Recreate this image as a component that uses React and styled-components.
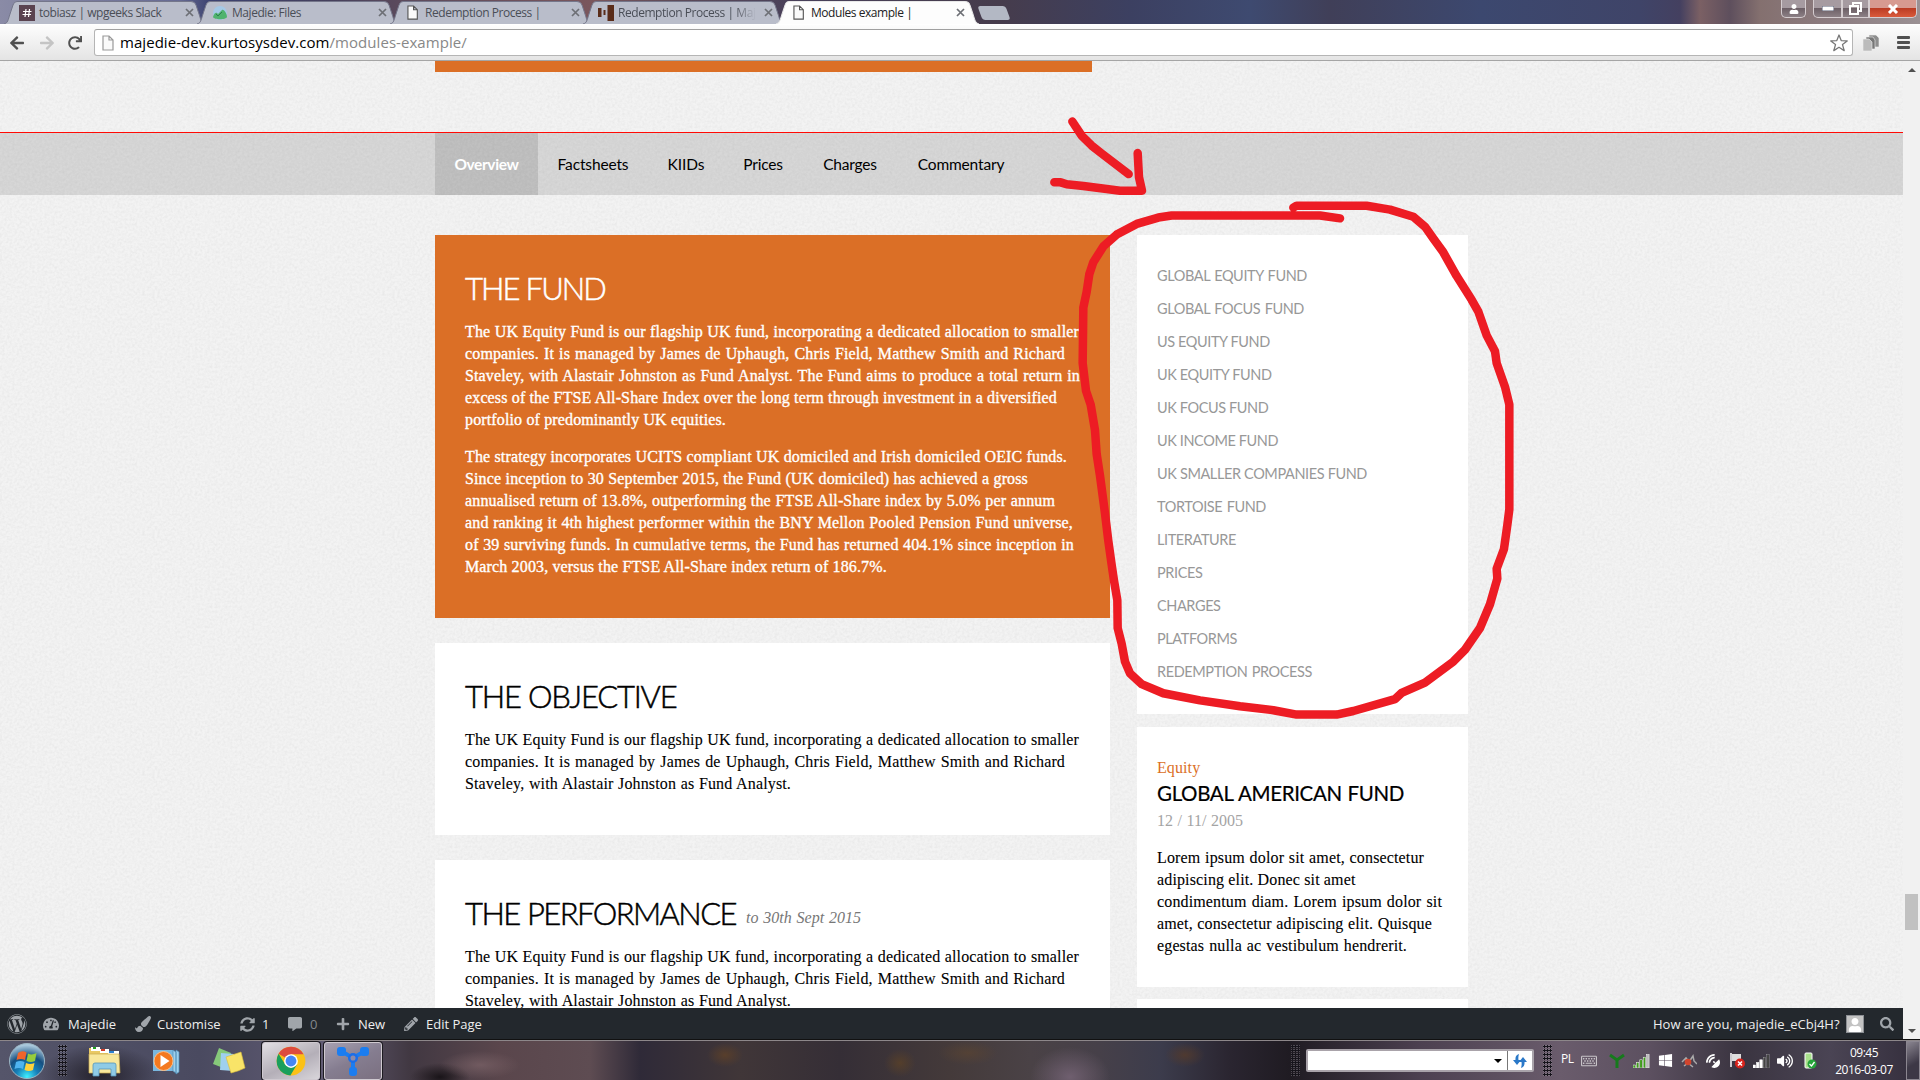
import React from "react";
import styled, { createGlobalStyle, css } from "styled-components";
import {
  FaWordpress, FaTachometerAlt, FaPaintBrush, FaSyncAlt, FaCommentAlt, FaPlus,
  FaPencilAlt, FaSearch, FaArrowLeft, FaArrowRight, FaRedo, FaUser,
  FaRegKeyboard, FaWindows, FaVolumeUp, FaSatelliteDish,
} from "react-icons/fa";

const sans = `"Open Sans", "Noto Sans", sans-serif`;
const display = `Lato, "Open Sans", sans-serif`;
const serif = `"Liberation Serif", "Times New Roman", serif`;
const orange = "#db6f26";

const grain = `url("data:image/svg+xml,%3Csvg xmlns='http://www.w3.org/2000/svg' width='240' height='240'%3E%3Cfilter id='n'%3E%3CfeTurbulence type='fractalNoise' baseFrequency='.4' numOctaves='2' stitchTiles='stitch'/%3E%3CfeColorMatrix values='0 0 0 0 0 0 0 0 0 0 0 0 0 0 0 .05 .05 0 0 -.038'/%3E%3C/filter%3E%3Crect width='240' height='240' filter='url(%23n)'/%3E%3C/svg%3E")`;

const GlobalStyle = createGlobalStyle`
  * { box-sizing: border-box; }
  body { margin: 0; overflow: hidden; }
  p, h2, h3, ul { margin: 0; padding: 0; font-weight: inherit; }
`;

const Screen = styled.div`
  position: relative;
  width: 1920px;
  height: 1080px;
  display: flex;
  flex-direction: column;
  overflow: hidden;
  font-family: ${sans};
`;

/* ---------- browser chrome ---------- */
const TabStrip = styled.div`
  height: 24px;
  flex: none;
  display: flex;
  align-items: flex-end;
  padding-left: 4px;
  background: linear-gradient(90deg, #8a8ba6 0, #666a92 180px, #3c4270 210px, #45405c 330px, #5b4a5c 400px, #7a565c 590px,
    #5c4a58 680px, #48405a 800px, #463c4c 1000px, #3c4061 1130px, #3e4a70 1250px, #403f58 1330px, #3c486f 1480px,
    #3f4468 1640px, #444060 1680px, #7b6064 1700px, #5e4f5d 1730px, #84706f 1760px, #8c7c80 1830px, #9b9194 1920px);
`;
const Tab = styled.div`
  position: relative;
  width: ${(p) => (p.$active ? 203 : 201)}px;
  height: 23px;
  flex: none;
  margin-right: ${(p) => (p.$active ? -1 : -8)}px;
  padding: 0 ${(p) => (p.$active ? 14 : 11)}px 0 15px;
  display: flex;
  align-items: center;
  z-index: ${(p) => (p.$active ? 2 : 1)};
  font-size: 12px;
  letter-spacing: -0.45px;
  color: ${(p) => (p.$active ? "#222" : "#4a4e57")};
`;
const TabShape = styled.svg`
  position: absolute;
  inset: 0;
  width: 100%;
  height: 100%;
  z-index: -1;
`;
const TabIcon = styled.span`
  width: 16px;
  margin-right: 4px;
  display: flex;
  justify-content: center;
`;
const TabTitle = styled.span`
  flex: 1;
  white-space: nowrap;
  margin-right: 8px;
  line-height: 20px;
  ${(p) => p.$fade && css`
    mask-image: linear-gradient(90deg, #000 84%, transparent);
  `}
`;
const NewTab = styled.span`
  width: 28px;
  height: 14px;
  margin: 0 0 4px 2px;
  background: #b3b8c4;
  border-radius: 3px;
  transform: skewX(20deg);
`;
const WindowButtons = styled.div`
  margin: 0 3px 0 auto;
  align-self: flex-start;
  display: flex;
`;
const WindowButton = styled.span`
  width: ${(p) => p.$w}px;
  height: 18px;
  margin-left: ${(p) => p.$gap || 0}px;
  display: flex;
  align-items: center;
  justify-content: center;
  color: #fff;
  border: 1px solid #d5cdd0;
  border-top: 0;
  border-radius: ${(p) => p.$round || "0"};
  background: ${(p) => p.$close
    ? "linear-gradient(#d79a90 0 45%, #b93a22 46%, #d95a3b)"
    : "linear-gradient(#a69ba1 0 45%, #6a5d64 46%, #8c8085)"};
`;
const Toolbar = styled.div`
  height: 37px;
  flex: none;
  display: flex;
  align-items: center;
  border-top: 1px solid #fff;
  border-bottom: 1px solid #a5a5a5;
  background: linear-gradient(#fdfdfd, #e4e4e4);
  color: #505050;
`;
const ToolSlot = styled.span`
  width: ${(p) => p.$w}px;
  flex: none;
  display: flex;
  justify-content: center;
  color: ${(p) => p.$color || "#505050"};
`;
const Omnibox = styled.div`
  width: 1759px;
  height: 27px;
  flex: none;
  margin: 0 8px 0 3px;
  padding: 0 4px 0 7px;
  display: flex;
  align-items: center;
  background: #fff;
  border: 1px solid #b5b5b5;
  border-top-color: #a0a0a0;
  border-radius: 3px;
`;
const Url = styled.span`
  flex: 1;
  margin-left: 6px;
  padding-bottom: 2px;
  font-size: 15px;
  letter-spacing: 0.05px;
  line-height: 22px;
  color: #888;
  b { color: #000; font-weight: 400; }
`;

/* ---------- web page ---------- */
const Viewport = styled.div`
  height: 979px;
  flex: none;
  display: flex;
`;
const Page = styled.div`
  width: 1903px;
  display: flex;
  flex-direction: column;
  background: ${grain} #f3f3f3;
`;
const PageBody = styled.div`
  height: 947px;
  overflow: hidden;
`;
const TopBanner = styled.div`
  width: 657px;
  height: 11px;
  margin-left: 435px;
  background: ${orange};
`;
const SubNav = styled.nav`
  height: 63px;
  margin-top: 60px;
  padding-left: 435px;
  display: flex;
  border-top: 1px solid #ff0a05;
  background: rgba(0, 0, 0, 0.115);
  background-clip: padding-box;
`;
const SubNavItem = styled.a`
  width: ${(p) => p.$w}px;
  padding-bottom: 1px;
  display: flex;
  align-items: center;
  justify-content: center;
  font: ${(p) => (p.$active ? 700 : 400)} 15.5px ${display};
  letter-spacing: ${(p) => p.$ls}px;
  color: ${(p) => (p.$active ? "#fff" : "#000")};
  background: ${(p) => (p.$active ? "rgba(0, 0, 0, 0.105)" : "none")};
`;
const Columns = styled.div`
  display: flex;
  gap: 27px;
  padding: 40px 0 0 435px;
`;
const Main = styled.main`
  width: 675px;
  display: flex;
  flex-direction: column;
  gap: 25px;
`;
const Aside = styled.aside`
  width: 331px;
  display: flex;
  flex-direction: column;
  gap: 13px;
`;
const Card = styled.section`
  height: ${(p) => p.$h}px;
  flex: none;
  padding: 35px 30px 0;
  color: ${(p) => (p.$accent ? "#fff" : "#000")};
  background: ${(p) => (p.$accent ? orange : "#fff")};
`;
const fitted = css`
  display: block;
  width: ${(p) => p.$w}px;
  white-space: nowrap;
  text-align: justify;
  text-align-last: justify;
`;
const HeadingRow = styled.div`
  display: flex;
  align-items: baseline;
  height: 51px;
`;
const Heading = styled.h2`
  ${fitted}
  font: 300 31px/36px ${display};
  letter-spacing: ${(p) => p.$ls}px;
  -webkit-text-stroke: 0.5px;
`;
const HeadingNote = styled.em`
  ${fitted}
  position: relative;
  top: -2px;
  margin-left: 10px;
  font: italic 16px/22px ${serif};
  color: #777;
`;
const Paragraph = styled.p`
  margin-bottom: 15px;
  font: 16px/22px ${serif};
  letter-spacing: 0.14px;
  -webkit-text-stroke: ${(p) => (p.$strong ? 0.35 : 0.1)}px;
`;
const Line = styled.span`
  ${fitted}
`;
const LinkCard = styled.ul`
  height: 479px;
  flex: none;
  padding: 24px 20px 0;
  list-style: none;
  background: #fff;
`;
const LinkItem = styled.li`
  ${fitted}
  height: 33px;
  font: 400 14.5px/33px ${display};
  letter-spacing: ${(p) => p.$ls}px;
  color: #989898;
`;
const FundCard = styled.section`
  height: 260px;
  flex: none;
  padding: 30px 20px 0;
  background: #fff;
  color: #000;
`;
const FundType = styled.div`
  font: 16px/22px ${serif};
  letter-spacing: 0.1px;
  color: ${orange};
`;
const FundName = styled.h3`
  ${fitted}
  height: 29px;
  font: 400 20.5px/28px ${display};
  letter-spacing: -0.35px;
  -webkit-text-stroke: 0.2px;
`;
const FundDate = styled.div`
  ${fitted}
  height: 39px;
  font: 16px/26px ${serif};
  color: #a4a4a4;
`;
const NextCard = styled.div`
  height: 40px;
  flex: none;
  margin-top: -1px;
  background: #fff;
`;
const AdminBar = styled.div`
  height: 32px;
  flex: none;
  display: flex;
  align-items: center;
  background: #23282d;
  color: #eee;
  font-size: 13px;
`;
const AdminIcon = styled.span`
  width: ${(p) => p.$w}px;
  display: flex;
  justify-content: center;
  color: #a0a5aa;
`;
const AdminLabel = styled.span`
  width: ${(p) => p.$w}px;
  white-space: nowrap;
  color: ${(p) => (p.$dim ? "#82878c" : "#eee")};
`;
const Avatar = styled.span`
  width: 18px;
  height: 18px;
  margin: 0 14px 0 6px;
  display: flex;
  align-items: flex-end;
  justify-content: center;
  border: 1px solid #8c8f94;
  background: #c3c3c3;
  color: #fff;
`;
const Scrollbar = styled.div`
  width: 17px;
  display: flex;
  flex-direction: column;
  align-items: center;
  justify-content: space-between;
  padding: 7px 0;
  background: #f1f1f1;
`;
const ScrollThumb = styled.span`
  width: 13px;
  height: 36px;
  margin-top: 722px;
  background: #c1c1c1;
`;
const ScrollArrow = styled.span`
  border: 4px solid transparent;
  border-top-width: ${(p) => (p.$up ? 0 : 4)}px;
  border-bottom-width: ${(p) => (p.$up ? 4 : 0)}px;
  border-${(p) => (p.$up ? "bottom" : "top")}-color: #505050;
`;

/* ---------- taskbar ---------- */
const Taskbar = styled.div`
  height: 40px;
  flex: none;
  display: flex;
  align-items: center;
  border-top: 1px solid #8d878a;
  box-shadow: 0 -1px #111;
  background:
    radial-gradient(ellipse 60px 30px at 100px 34px, rgba(25, 22, 30, .8), transparent),
    radial-gradient(ellipse 40px 14px at 480px 24px, rgba(125, 100, 105, .7), transparent),
    radial-gradient(ellipse 30px 14px at 440px 36px, rgba(20, 16, 20, .9), transparent),
    radial-gradient(ellipse 18px 12px at 725px 14px, rgba(95, 65, 40, .8), transparent),
    radial-gradient(ellipse 16px 14px at 900px 22px, rgba(90, 65, 40, .8), transparent),
    radial-gradient(ellipse 30px 12px at 968px 12px, rgba(90, 68, 50, .7), transparent),
    radial-gradient(ellipse 40px 30px at 1070px 36px, rgba(115, 98, 115, .9), transparent),
    radial-gradient(ellipse 20px 12px at 1185px 14px, rgba(90, 60, 40, .7), transparent),
    linear-gradient(90deg, #55556a 0, #4a4a60 200px, #625c74 330px, #413842 410px, #5a464c 500px, #5e4c52 590px, #2f2a38 640px,
      #403638 740px, #352e36 840px, #443a3a 950px, #4a4246 1030px, #464049 1100px, #3c3c4c 1160px, #2a2530 1230px,
      #1f1b22 1290px, #4c4050 1420px, #6a5c6c 1560px, #5c5060 1650px, #3a3440 1740px, #4a4454 1830px, #342e3c 1920px);
`;
const TaskSlot = styled.span`
  width: ${(p) => p.$w}px;
  height: 38px;
  margin-left: ${(p) => p.$gap || 0}px;
  display: flex;
  flex: none;
  align-items: center;
  justify-content: center;
  color: #fff;
  ${(p) => p.$open && css`
    border: 1px solid #cfc9d0;
    border-radius: 3px;
    box-shadow: 0 0 0 1px #1c1a20;
    background: ${p.$open === "active"
      ? "linear-gradient(155deg, #e2dfe4, #b4afb8 55%, #d8d5da)"
      : "linear-gradient(155deg, #a7a0b0, #857d90 50%, #7b7080)"};
  `}
`;
const Grip = styled.span`
  width: 9px;
  height: 31px;
  margin-left: ${(p) => p.$gap}px;
  flex: none;
  background: radial-gradient(circle at 1.5px 1.5px, #15131a 1px, rgba(170, 165, 175, .35) 1.4px, transparent 1.8px) 0 0 / 3px 4px;
`;
const AddressBox = styled.div`
  width: 228px;
  height: 23px;
  margin-left: 6px;
  flex: none;
  display: flex;
  align-items: center;
  justify-content: flex-end;
  border: 2px solid #a9a3aa;
  border-radius: 2px;
  background: #fff;
`;
const Caret = styled.span`
  margin-right: 5px;
  border: 4px solid transparent;
  border-top-color: #000;
  border-bottom: 0;
`;
const GoButton = styled.span`
  width: 25px;
  height: 19px;
  display: flex;
  align-items: center;
  justify-content: center;
  border-left: 1px solid #777;
`;
const Language = styled.span`
  width: 16px;
  margin-left: 9px;
  padding-bottom: 5px;
  color: #fff;
  font-size: 12px;
  letter-spacing: -0.5px;
`;
const FlippedDish = styled(FaSatelliteDish)`
  transform: scaleX(-1);
`;
const Clock = styled.div`
  width: 70px;
  margin-left: 7px;
  color: #fff;
  text-align: center;
  font-size: 12px;
  line-height: 17px;
  letter-spacing: -0.5px;
`;
const ShowDesktop = styled.span`
  width: 14px;
  height: 39px;
  margin-left: auto;
  border: 1px solid #8b8690;
  background: linear-gradient(150deg, #8a8590, #3d3846 60%);
`;
const Annotation = styled.svg`
  position: absolute;
  inset: 0;
  width: 1920px;
  height: 1080px;
  pointer-events: none;
  path {
    fill: none;
    stroke: #ed1c24;
    stroke-width: 8.5px;
    stroke-linecap: round;
    stroke-linejoin: round;
    vector-effect: non-scaling-stroke;
  }
`;

const FileIcon = ({ size = 15, color = "#555" }) => (
  <svg width={size * 0.75} height={size} viewBox="0 0 12 16" fill="#fafafa" stroke={color} strokeWidth="1.2">
    <path d="M1 1h6l4 4v10H1zM7 1v4h4" />
  </svg>
);
const SlackHash = () => (
  <svg width="16" height="16" viewBox="0 0 16 16">
    <rect width="16" height="16" fill="#5a4350" />
    <path d="M7 4l-1 8M10.500 4l-1 8M4 6.500h8.500M3.500 9.500H12" stroke="#fff" strokeWidth="1.2" />
  </svg>
);
const Basecamp = () => (
  <svg width="16" height="16" viewBox="0 0 16 16">
    <circle cx="8" cy="8" r="7" fill="#a5c9e6" />
    <path d="M1 12C2 8 4 7 5 8l1 1 4-4c2-1 5 4 5 7-1 3-13 3-14 0z" fill="#4fb36e" />
    <path d="M4 9l2 2 4-4" fill="none" stroke="#2d7f50" />
  </svg>
);
const MajedieMark = () => (
  <svg width="16" height="16" viewBox="0 0 16 16" fill="#5a2d1a">
    <path d="M0 3h3.500v9H0zM5.500 5h2v5h-2zM9.500 0H16v16H9.500z" />
  </svg>
);
const CloseX = () => (
  <svg width="9" height="9" viewBox="0 0 9 9" stroke="#6d6f75" strokeWidth="1.7">
    <path d="M1 1l7 7M8 1L1 8" />
  </svg>
);
const BrowserTab = ({ icon, title, active, fade }) => (
  <Tab $active={active}>
    <TabShape viewBox="0 0 201 23" preserveAspectRatio="none">
      <path
        d="M0 23C4 22 4 19 6 13L9 4Q10 .5 13 .5H187Q191 .5 192 4L195 13C197 19 197 22 201 23"
        fill={active ? "#fdfdfd" : "#b9bdca"}
        stroke={active ? "#e8e8e8" : "#74768a"}
      />
    </TabShape>
    <TabIcon>{icon}</TabIcon>
    <TabTitle $fade={fade}>{title}</TabTitle>
    <CloseX />
  </Tab>
);

const StartOrb = () => (
  <svg width="38" height="38" viewBox="0 0 38 38">
    <defs>
      <radialGradient id="orb" cx=".5" cy=".95" r=".9">
        <stop offset="0" stopColor="#3ff0ff" /><stop offset=".35" stopColor="#167fb8" />
        <stop offset=".65" stopColor="#164f80" /><stop offset="1" stopColor="#a9c8dc" />
      </radialGradient>
    </defs>
    <circle cx="19" cy="19" r="17.500" fill="url(#orb)" stroke="#9db6c4" />
    <path d="M10 11q4-3 8.500-.5L17 18q-4-2-8.500 0z" fill="#f0642b" />
    <path d="M20 11.500q4 2 8.500-.5L27 19q-4 2-8.500 0z" fill="#96cc3d" />
    <path d="M8 20q4-2 8.500 0L15 27q-4-2-8.500 0z" fill="#4fb4f0" />
    <path d="M18 21q4 2 8.500 0L25 28q-4 2-8.500 0z" fill="#ffd23c" />
  </svg>
);
const Explorer = () => (
  <svg width="33" height="32" viewBox="0 0 33 32">
    <path d="M1 6V3h9l2 3h19v20H1z" fill="#e9c964" />
    <path d="M3 2h9v4H3z" fill="#fff" /><path d="M5 2h3v2H5z" fill="#20a020" />
    <path d="M12 4h9v4h-9z" fill="#fff" /><path d="M13 4h4v2h-4z" fill="#d23a25" />
    <path d="M20 6h11v4H20z" fill="#fff" /><path d="M21 6h5v2h-5z" fill="#2a80d0" />
    <path d="M1 9h30l1 19H1z" fill="#f8e79c" stroke="#c9a94d" strokeWidth=".7" />
    <path d="M5 31V20q0-2 2-2h19q2 0 2 2v11h-5v-7H11v7z" fill="#8fcbe6" stroke="#5596b8" strokeWidth=".8" />
  </svg>
);
const MediaPlayer = () => (
  <svg width="28" height="28" viewBox="0 0 28 28">
    <path d="M1 3h20v21H1z" fill="#79b7df" /><path d="M21 3l3 2v21l-3-2zM24 3l3 2v20l-3 2z" fill="#9fd0ec" stroke="#4f8eb8" strokeWidth=".7" />
    <circle cx="11.500" cy="14" r="9.500" fill="#f4791f" stroke="#fbc08c" />
    <path d="M8.500 8l9 6-9 6z" fill="#fff" />
  </svg>
);
const StickyNotes = () => (
  <svg width="34" height="28" viewBox="0 0 34 28">
    <path d="M7 1l12 5-5 16-13-5z" fill="#86c97a" /><path d="M9 6l13 1-1 17-13-1z" fill="#9fd0ee" />
    <path d="M14 10l15-5 4 16q-6 3-14 5z" fill="#f9e468" stroke="#d9bc3a" strokeWidth=".6" />
  </svg>
);
const ChromeLogo = () => (
  <svg width="30" height="30" viewBox="0 0 48 48">
    <circle cx="24" cy="24" r="23" fill="#fbc116" />
    <path d="M24 24L4.100 12.500A23 23 0 0 1 44 13H24z" fill="#dd4b3e" />
    <path d="M4.100 12.500A23 23 0 0 0 23 47L33.500 29.500 14 28.500z" fill="#1a9f5c" />
    <circle cx="24" cy="24" r="11" fill="#fff" /><circle cx="24" cy="24" r="8.700" fill="#4586f4" />
  </svg>
);
const NodesLogo = () => (
  <svg width="32" height="30" viewBox="0 0 32 30" fill="#1b7df0">
    <path d="M4 5l12 7 12-7M16 11v15" stroke="#1b7df0" strokeWidth="4" fill="none" />
    <rect width="9" height="9" rx="3" x="0" y="1" /><rect width="9" height="9" rx="3" x="23" y="1" />
    <circle cx="16" cy="12" r="3.800" fill="#8d8aa8" stroke="#1b6ee8" strokeWidth="2.500" /><rect x="12" y="21" width="8" height="9" rx="3" />
  </svg>
);
const Bars = ({ colors }) => (
  <svg width="17" height="14" viewBox="0 0 17 14">
    {colors.map((c, i) => (
      <rect key={i} x={i * 3.4} y={11 - i * 2.6} width="2.500" height={3 + i * 2.600} fill={c} stroke="#fff" strokeWidth={c === "#444" ? 0.2 : 0.5} />
    ))}
  </svg>
);

const NAV = [["Overview", 103, -0.4], ["Factsheets", 110, -0.15], ["KIIDs", 76, -0.1], ["Prices", 78, -0.2], ["Charges", 96, -0.2], ["Commentary", 126, -0.15]];
const LINKS = [
  ["GLOBAL EQUITY FUND", 150], ["GLOBAL FOCUS FUND", 147], ["US EQUITY FUND", 112], ["UK EQUITY FUND", 113],
  ["UK FOCUS FUND", 110], ["UK INCOME FUND", 121], ["UK SMALLER COMPANIES FUND", 210], ["TORTOISE FUND", 109],
  ["LITERATURE", 79], ["PRICES", 46], ["CHARGES", 65], ["PLATFORMS", 80], ["REDEMPTION PROCESS", 155],
];
const INTRO = [
  ["The UK Equity Fund is our flagship UK fund, incorporating a dedicated allocation to smaller", 614],
  ["companies. It is managed by James de Uphaugh, Chris Field, Matthew Smith and Richard", 600],
  ["Staveley, with Alastair Johnston as Fund Analyst.", 326],
];
const FUND = [
  INTRO[0],
  INTRO[1],
  ["Staveley, with Alastair Johnston as Fund Analyst. The Fund aims to produce a total return in", 615],
  ["excess of the FTSE All-Share Index over the long term through investment in a diversified", 592],
  ["portfolio of predominantly UK equities.", 259],
];
const STRATEGY = [
  ["The strategy incorporates UCITS compliant UK domiciled and Irish domiciled OEIC funds.", 602],
  ["Since inception to 30 September 2015, the Fund (UK domiciled) has achieved a gross", 563],
  ["annualised return of 13.8%, outperforming the FTSE All-Share index by 5.0% per annum", 590],
  ["and ranking it 4th highest performer within the BNY Mellon Pooled Pension Fund universe,", 608],
  ["of 39 surviving funds. In cumulative terms, the Fund has returned 404.1% since inception in", 609],
  ["March 2003, versus the FTSE All-Share index return of 186.7%.", 421],
];
const LOREM = [
  ["Lorem ipsum dolor sit amet, consectetur", 267], ["adipiscing elit. Donec sit amet", 198],
  ["condimentum diam. Lorem ipsum dolor sit", 285], ["amet, consectetur adipiscing elit. Quisque", 275],
  ["egestas nulla ac vestibulum hendrerit.", 250],
];
const Lines = ({ rows, strong }) => (
  <Paragraph $strong={strong}>
    {rows.map(([text, w]) => <Line key={text} $w={w}>{text} </Line>)}
  </Paragraph>
);

export default function App() {
  return (
    <Screen>
      <GlobalStyle />
      <TabStrip>
        <BrowserTab icon={<SlackHash />} title="tobiasz | wpgeeks Slack" />
        <BrowserTab icon={<Basecamp />} title="Majedie: Files" />
        <BrowserTab icon={<FileIcon />} title="Redemption Process |" />
        <BrowserTab icon={<MajedieMark />} title="Redemption Process | Maj" fade />
        <BrowserTab icon={<FileIcon />} title="Modules example |" active />
        <NewTab />
        <WindowButtons>
          <WindowButton $w={25} $round="0 0 5px 5px"><FaUser size={10} /></WindowButton>
          <WindowButton $w={29} $gap={7} $round="0 0 0 5px">
            <svg width="12" height="5"><rect width="12" height="5" fill="#fff" stroke="#555a70" /></svg>
          </WindowButton>
          <WindowButton $w={27}>
            <svg width="13" height="13" fill="none" stroke="#fff" strokeWidth="2"><path d="M4 3V1h8v8h-2M1 4h8v8H1z" /></svg>
          </WindowButton>
          <WindowButton $w={48} $close $round="0 0 5px 0">
            <svg width="12" height="10" stroke="#fff" strokeWidth="3"><path d="M2 1l8 8M10 1L2 9" /></svg>
          </WindowButton>
        </WindowButtons>
      </TabStrip>
      <Toolbar>
        <ToolSlot $w={34}><FaArrowLeft size={16} /></ToolSlot>
        <ToolSlot $w={25} $color="#c4c4c4"><FaArrowRight size={16} /></ToolSlot>
        <ToolSlot $w={32}><FaRedo size={14} /></ToolSlot>
        <Omnibox>
          <FileIcon size={16} color="#999" />
          <Url><b>majedie-dev.kurtosysdev.com</b>/modules-example/</Url>
          <svg width="18" height="18" viewBox="0 0 18 18" fill="none" stroke="#777" strokeWidth="1.300">
            <path d="M9 1l2.200 5.600 6 .3-4.700 3.700 1.700 6L9 13.300l-5.200 3.300 1.700-6L.8 6.900l6-.3z" strokeLinejoin="round" />
          </svg>
        </Omnibox>
        <ToolSlot $w={20}>
          <svg width="18" height="18" viewBox="0 0 18 18" stroke="#eee" strokeWidth=".6">
            <path d="M7 1h7l3 3v9H7z" fill="#8d8d8d" /><path d="M4 3h7l2 3v9H4z" fill="#777" /><path d="M1 5h6l3 3v9H1z" fill="#bbb" />
          </svg>
        </ToolSlot>
        <ToolSlot $w={44}>
          <svg width="13" height="14" fill="#505050"><rect width="13" height="3" rx="1" /><rect y="5" width="13" height="3" rx="1" /><rect y="10" width="13" height="3" rx="1" /></svg>
        </ToolSlot>
      </Toolbar>

      <Viewport>
        <Page>
          <PageBody>
            <TopBanner />
            <SubNav>
              {NAV.map(([label, w, ls], i) => (
                <SubNavItem key={label} $w={w} $ls={ls} $active={i === 0}>{label}</SubNavItem>
              ))}
            </SubNav>
            <Columns>
              <Main>
                <Card $h={383} $accent>
                  <HeadingRow><Heading $w={140} $ls={-1.9}>THE FUND</Heading></HeadingRow>
                  <Lines rows={FUND} strong />
                  <Lines rows={STRATEGY} strong />
                </Card>
                <Card $h={192}>
                  <HeadingRow><Heading $w={211} $ls={-1.2}>THE OBJECTIVE</Heading></HeadingRow>
                  <Lines rows={INTRO} />
                </Card>
                <Card $h={192}>
                  <HeadingRow>
                    <Heading $w={271} $ls={-1.55}>THE PERFORMANCE</Heading>
                    <HeadingNote $w={115}>to 30th Sept 2015</HeadingNote>
                  </HeadingRow>
                  <Lines rows={INTRO} />
                </Card>
              </Main>
              <Aside>
                <LinkCard>
                  {LINKS.map(([label, w]) => <LinkItem key={label} $w={w} $ls={-0.4}>{label}</LinkItem>)}
                </LinkCard>
                <FundCard>
                  <FundType>Equity</FundType>
                  <FundName $w={247}>GLOBAL AMERICAN FUND</FundName>
                  <FundDate $w={86}>12 / 11/ 2005</FundDate>
                  <Lines rows={LOREM} />
                </FundCard>
                <NextCard />
              </Aside>
            </Columns>
          </PageBody>
          <AdminBar>
            <AdminIcon $w={34}><FaWordpress size={20} /></AdminIcon>
            <AdminIcon $w={34}><FaTachometerAlt size={16} /></AdminIcon>
            <AdminLabel $w={60}>Majedie</AdminLabel>
            <AdminIcon $w={29}><FaPaintBrush size={16} /></AdminIcon>
            <AdminLabel $w={75}>Customise</AdminLabel>
            <AdminIcon $w={30}><FaSyncAlt size={15} /></AdminIcon>
            <AdminLabel $w={18}>1</AdminLabel>
            <AdminIcon $w={30}><FaCommentAlt size={14} /></AdminIcon>
            <AdminLabel $w={18} $dim>0</AdminLabel>
            <AdminIcon $w={30}><FaPlus size={14} /></AdminIcon>
            <AdminLabel $w={38}>New</AdminLabel>
            <AdminIcon $w={30}><FaPencilAlt size={14} /></AdminIcon>
            <AdminLabel $w={1227}>Edit Page</AdminLabel>
            <AdminLabel $w={187}>How are you, majedie_eCbj4H?</AdminLabel>
            <Avatar><FaUser size={14} /></Avatar>
            <AdminIcon $w={18}><FaSearch size={14} /></AdminIcon>
          </AdminBar>
        </Page>
        <Scrollbar>
          <ScrollArrow $up />
          <ScrollThumb />
          <ScrollArrow />
        </Scrollbar>
      </Viewport>

      <Taskbar>
        <TaskSlot $w={38} $gap={8}><StartOrb /></TaskSlot>
        <Grip $gap={12} />
        <TaskSlot $w={34} $gap={20}><Explorer /></TaskSlot>
        <TaskSlot $w={34} $gap={28}><MediaPlayer /></TaskSlot>
        <TaskSlot $w={34} $gap={29}><StickyNotes /></TaskSlot>
        <TaskSlot $w={58} $gap={16} $open="active"><ChromeLogo /></TaskSlot>
        <TaskSlot $w={58} $gap={4} $open="idle"><NodesLogo /></TaskSlot>
        <Grip $gap={909} />
        <AddressBox>
          <Caret />
          <GoButton>
            <svg width="16" height="16" viewBox="0 0 16 16" fill="#2a78c8">
              <path d="M7 1Q3 2 3.500 7H1l4 5 4-5H6.500Q6 4 7 1zM9 15q4-1 3.500-6H15l-4-5-4 5h2.500q.5 3-.5 6z" />
            </svg>
          </GoButton>
        </AddressBox>
        <Grip $gap={9} />
        <Language>PL</Language>
        <TaskSlot $w={24}><FaRegKeyboard size={16} color="#c8c4c8" /></TaskSlot>
        <TaskSlot $w={24} $gap={4}>
          <svg width="16" height="15" viewBox="0 0 16 15" fill="none" stroke="#167a1c" strokeWidth="3"><path d="M1 2l7 5 7-5M8 7v8" /></svg>
        </TaskSlot>
        <TaskSlot $w={24}><Bars colors={["#3f9c1c", "#3f9c1c", "#3f9c1c", "#3f9c1c", "#bbb"]} /></TaskSlot>
        <TaskSlot $w={24}><FaWindows size={15} /></TaskSlot>
        <TaskSlot $w={24}>
          <svg width="16" height="16" viewBox="0 0 16 16"><path d="M1 9l4-4 3 4 4-6 1 5 3 3M3 13l4-3 5 4" stroke="#aaa" strokeWidth="1.500" fill="none" /><circle cx="7" cy="9" r="3.300" fill="#d0452e" /></svg>
        </TaskSlot>
        <TaskSlot $w={24}><FlippedDish size={14} /></TaskSlot>
        <TaskSlot $w={24}>
          <svg width="17" height="17" viewBox="0 0 17 17"><path d="M2 1v14" stroke="#fff" strokeWidth="1.500" /><path d="M3 2h9v7H3z" fill="#ddd" /><circle cx="11" cy="11.500" r="5" fill="#d8231c" /><path d="M9 9.500l4 4M13 9.500l-4 4" stroke="#fff" strokeWidth="1.500" /></svg>
        </TaskSlot>
        <TaskSlot $w={24}><Bars colors={["#fff", "#fff", "#fff", "#444", "#444"]} /></TaskSlot>
        <TaskSlot $w={24}><FaVolumeUp size={16} /></TaskSlot>
        <TaskSlot $w={25}>
          <svg width="14" height="18" viewBox="0 0 14 18"><rect x="2" y="1" width="7" height="15" rx="1" fill="#a8e08c" stroke="#fff" /><circle cx="9" cy="12" r="4.500" fill="#26a53a" /><path d="M6.500 12l2 2 3-4" fill="none" stroke="#fff" strokeWidth="1.300" /></svg>
        </TaskSlot>
        <Clock>09:45<br />2016-03-07</Clock>
        <ShowDesktop />
      </Taskbar>

      <Annotation>
        <g transform="translate(1040 110) scale(.33333 .39541)">
          <path d="M97 29L125 65L155 90L185 110L266 162" />
          <path d="M293 109L297 170L306 204H240L200 200L130 192L80 188L62 183H43" />
          <path d="M900 274L840 267H395L355 272L290 288L230 315L190 345L160 385L148 415L140 460L130 500L128 640L138 710L152 745L165 810L170 870L180 925L195 1020L205 1090L215 1150L222 1190L232 1240L233 1310L245 1350L255 1395L270 1425L305 1452L370 1475L480 1493L600 1508L700 1518L770 1529H890L940 1520L1065 1490L1085 1474L1155 1448L1240 1395L1275 1365L1320 1310L1350 1250L1372 1185L1370 1160L1392 1110L1402 1050L1408 1010V745L1395 700L1370 640L1365 610L1340 570L1315 510L1295 480L1250 420L1210 360L1180 325L1155 295L1120 270L1050 252L980 242H770L760 247" />
        </g>
      </Annotation>
    </Screen>
  );
}
